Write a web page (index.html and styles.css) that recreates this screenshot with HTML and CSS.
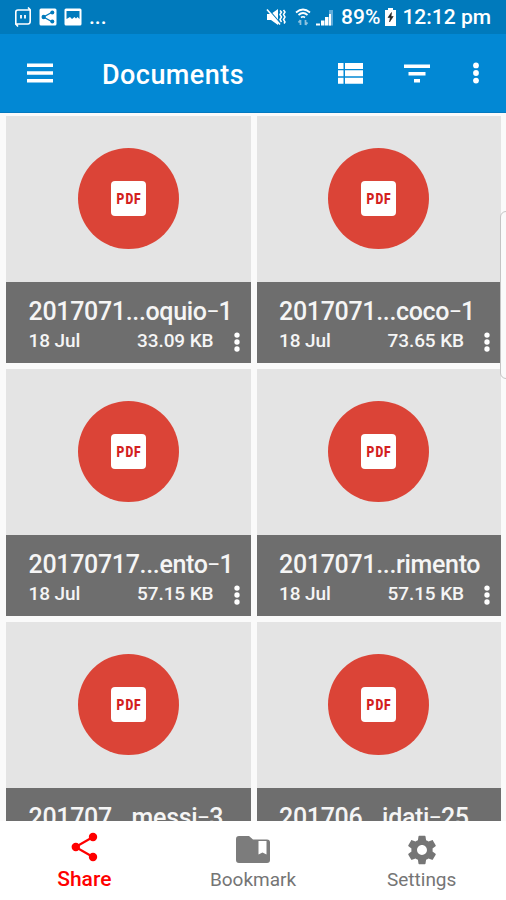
FILE: index.html
```html
<!DOCTYPE html>
<html lang="en">
<head>
    <meta charset="UTF-8">
    <meta name="viewport" content="width=device-width, initial-scale=1.0">
    <title>Documents</title>
    <link rel="stylesheet" href="styles.css">
</head>
<body>
    <!-- Shared icons -->
    <svg class="sprite" width="0" height="0">
        <symbol id="icon-dots" viewBox="0 0 8 24">
            <circle cx="4" cy="4.4" r="2.9"/>
            <circle cx="4" cy="12" r="2.9"/>
            <circle cx="4" cy="19.6" r="2.9"/>
        </symbol>
    </svg>

    <div class="status-bar">
        <div class="status-left">
            <svg width="18" height="20" viewBox="0 0 18 20" fill="none" stroke="#fff" stroke-width="1.6">
                <path d="M4 3h12.200v11M14 .5 16.500 3M14 17H1.800V5M4 19.500 1.800 17"/>
                <path d="M1.800 5q0-2 2.200-2M16.200 14q0 3-2.200 3"/>
                <path d="M7 8v3.500M11 8v3.500" stroke-width="1.800"/>
            </svg>
            <svg width="18" height="18" viewBox="0 0 18 18">
                <rect x=".5" y=".5" width="17" height="17" rx="1.500" fill="#fff"/>
                <path d="M13.500 4 4.500 9l9 5" fill="none" stroke="#007abc" stroke-width="1.300"/>
                <g fill="#007abc"><circle cx="13.300" cy="4.500" r="2"/><circle cx="4.700" cy="9" r="2.200"/><circle cx="13.300" cy="13.500" r="2"/></g>
            </svg>
            <svg width="18" height="18" viewBox="0 0 18 18">
                <rect x=".5" y=".5" width="17" height="17" rx="1.500" fill="#fff"/>
                <path d="M2.500 3h13v8l-2-2-1.500 1.500L10.500 9 8 11 6 9l-3.500 2z" fill="#007abc"/>
            </svg>
            <span class="more">...</span>
        </div>
        <div class="status-right">
            <svg class="mute" width="20" height="18" viewBox="0 0 20 18">
                <path d="M1 6h4l7-5v16l-7-5H1z" fill="#fff"/>
                <path d="M2.500 1.500l12 14" stroke="#007abc" stroke-width="1.200"/>
                <path d="M1 1.500l13 15" stroke="#fff" stroke-width="1.600"/>
                <path d="M14 2.500l1.500 1.500-1.500 2.500 1.500 2.500-1.500 2.500 1.500 2.500M17.500 2l1.500 2-1.500 2.500 1.500 2.500-1.500 2.500 1.500 2.500-1 1.500" fill="none" stroke="#fff" stroke-width="1.500"/>
            </svg>
            <svg class="wifi" width="16" height="18" viewBox="0 0 16 18" fill="none" stroke="#fff" stroke-width="1.700">
                <path d="M1 4.500q7-6 14 0M3.500 7q4.500-4 9 0M6 9.500q2-1.500 4 0"/>
                <path d="M5.500 17v-5M3.500 14.500l2-2.500M10.500 12v5M12.500 14.500l-2 2.500" stroke="#8fc3e0" stroke-width="1.700"/>
            </svg>
            <svg class="signal" width="18" height="17" viewBox="0 0 18 17">
                <path d="M0 14.500h4v2H0zM5 11.500h3.500v5H5zM9 8h3.500v8.500H9z" fill="#fff"/>
                <path d="M13 1h4v15.500h-4z" fill="#62addb"/>
                <path d="M13 5h2v11.500h-2z" fill="#fff"/>
            </svg>
            <span class="battery-text">89%</span>
            <svg class="battery" width="11" height="18" viewBox="0 0 11 18">
                <path d="M3 0h5v2h3v16H0V2h3z" fill="#fff"/>
                <path d="M6.500 4.500 3 9.500h2.300L4.500 14l3.700-5.500H6z" fill="#222" stroke="#222" stroke-width=".6"/>
            </svg>
            <span class="clock">12:12 pm</span>
        </div>
    </div>

    <header class="app-bar">
        <svg class="menu" width="26" height="20" viewBox="0 0 26 20" fill="#fff">
            <path d="M0 .5h26v3.500H0zM0 8.200h26v3.500H0zM0 16h26v3.500H0z"/>
        </svg>
        <h1>Documents</h1>
        <svg class="list" width="25" height="21" viewBox="0 0 25 21" fill="#fff">
            <path d="M0 0h5.500v6H0zM7 0h18v6H7zM0 7.300h5.500v6H0zM7 7.300h18v6H7zM0 14.700h5.500v6H0zM7 14.700h18v6H7z"/>
        </svg>
        <svg class="filter" width="26" height="19" viewBox="0 0 26 19" fill="#fff">
            <path d="M0 .5h26v3.500H0zM4.500 8h17v3.500h-17zM10 15h6v3.500h-6z"/>
        </svg>
        <svg class="overflow" width="8" height="24"><use href="#icon-dots"/></svg>
    </header>

    <main class="grid">
        <div class="card">
            <div class="thumb"><div class="circle"><div class="file"><span>PDF</span></div></div></div>
            <div class="info">
                <div class="name">2017071...oquio<span class="dash">–</span>1</div>
                <div class="meta"><span class="date">18 Jul</span><span class="size">33.09 KB</span><svg class="dots" width="8" height="22"><use href="#icon-dots"/></svg></div>
            </div>
        </div>
        <div class="card">
            <div class="thumb"><div class="circle"><div class="file"><span>PDF</span></div></div></div>
            <div class="info">
                <div class="name">2017071...coco<span class="dash">–</span>1</div>
                <div class="meta"><span class="date">18 Jul</span><span class="size">73.65 KB</span><svg class="dots" width="8" height="22"><use href="#icon-dots"/></svg></div>
            </div>
        </div>
        <div class="card">
            <div class="thumb"><div class="circle"><div class="file"><span>PDF</span></div></div></div>
            <div class="info">
                <div class="name">20170717...ento<span class="dash">–</span>1</div>
                <div class="meta"><span class="date">18 Jul</span><span class="size">57.15 KB</span><svg class="dots" width="8" height="22"><use href="#icon-dots"/></svg></div>
            </div>
        </div>
        <div class="card">
            <div class="thumb"><div class="circle"><div class="file"><span>PDF</span></div></div></div>
            <div class="info">
                <div class="name">2017071...rimento</div>
                <div class="meta"><span class="date">18 Jul</span><span class="size">57.15 KB</span><svg class="dots" width="8" height="22"><use href="#icon-dots"/></svg></div>
            </div>
        </div>
        <div class="card">
            <div class="thumb"><div class="circle"><div class="file"><span>PDF</span></div></div></div>
            <div class="info">
                <div class="name">201707...messi<span class="dash">–</span>3</div>
            </div>
        </div>
        <div class="card">
            <div class="thumb"><div class="circle"><div class="file"><span>PDF</span></div></div></div>
            <div class="info">
                <div class="name">201706...idati<span class="dash">–</span>25</div>
            </div>
        </div>
        <div class="edge-handle"></div>
    </main>

    <nav class="bottom-nav">
        <a class="tab active">
            <svg width="28" height="30" viewBox="0 0 28 30">
                <path d="M23 5 5.500 15 23 25" fill="none" stroke="#f00" stroke-width="2.200"/>
                <g fill="#f00"><circle cx="23" cy="5" r="4.200"/><circle cx="5.800" cy="15" r="4.200"/><circle cx="23" cy="25" r="4.200"/></g>
            </svg>
            <span>Share</span>
        </a>
        <a class="tab">
            <svg class="folder" width="34" height="27" viewBox="0 0 34 27">
                <path d="M3 0h10l4 3.500h14q3 0 3 3V24q0 3-3 3H3q-3 0-3-3V3q0-3 3-3z" fill="#7c7c7c"/>
                <path d="M22.500 5h8v13.500l-4-2-4 2z" fill="#fff"/>
            </svg>
            <span>Bookmark</span>
        </a>
        <a class="tab">
            <svg class="gear" width="34" height="34" viewBox="0 0 24 24">
                <path fill="#757575" d="M19.430 12.980c.04-.32.07-.64.07-.98s-.03-.66-.07-.98l2.110-1.650c.19-.15.24-.42.12-.64l-2-3.460c-.12-.22-.39-.3-.61-.22l-2.490 1c-.52-.4-1.080-.73-1.690-.98l-.38-2.650C14.460 2.180 14.250 2 14 2h-4c-.25 0-.46.18-.49.42l-.38 2.650c-.61.25-1.170.59-1.690.98l-2.490-1c-.23-.09-.49 0-.61.22l-2 3.460c-.13.22-.07.49.12.64l2.110 1.650c-.04.32-.07.65-.07.98s.03.66.07.98l-2.110 1.650c-.19.15-.24.42-.12.64l2 3.460c.12.22.39.3.61.22l2.490-1c.52.4 1.080.73 1.690.98l.38 2.650c.03.24.24.42.49.42h4c.25 0 .46-.18.49-.42l.38-2.650c.61-.25 1.170-.59 1.690-.98l2.490 1c.23.09.49 0 .61-.22l2-3.460c.12-.22.07-.49-.12-.64l-2.110-1.650zM12 15.500c-1.930 0-3.500-1.570-3.500-3.500s1.570-3.500 3.500-3.500 3.500 1.570 3.500 3.500-1.570 3.500-3.500 3.500z"/>
            </svg>
            <span>Settings</span>
        </a>
    </nav>
</body>
</html>
```
FILE: styles.css
```css
* {
    box-sizing: border-box;
}
body {
    margin: 0;
    height: 900px;
    display: flex;
    flex-direction: column;
    overflow: hidden;
    background-color: #fafafa;
    font-family: Roboto, sans-serif;
}
.sprite {
    position: absolute;
}
svg {
    display: block;
    flex: none;
}
.status-bar {
    display: flex;
    flex: none;
    justify-content: space-between;
    height: 34px;
    padding: 0 15px 0 14px;
    background-color: #007abc;
    color: white;
    font-size: 21px;
    font-weight: 500;
    line-height: 36px;
}
.status-left, .status-right {
    display: flex;
    align-items: center;
}
.status-left {
    gap: 7px;
}
.wifi {
    margin-left: 9px;
}
.signal {
    margin-left: 5px;
}
.battery-text {
    margin-left: 7px;
}
.battery {
    margin-left: 5px;
}
.clock {
    margin-left: 6px;
}
.app-bar {
    display: flex;
    flex: none;
    align-items: center;
    height: 79px;
    padding: 0 26px 0 27px;
    background-color: #0288d4;
    border-bottom: 1px solid #0379c0;
    color: white;
    fill: white;
}
h1 {
    flex: 1;
    margin: 4px 0 0 49px;
    font-size: 27px;
    font-weight: 500;
    letter-spacing: 0.45px;
}
.filter {
    margin-left: 41px;
}
.overflow {
    margin-left: 42px;
}
.grid {
    position: relative;
    flex: 1;
    display: grid;
    grid-template-columns: repeat(2, minmax(0, 1fr));
    grid-auto-rows: 247px;
    gap: 6px;
    padding: 3px 5px 0 6px;
    overflow: hidden;
}
.card {
    display: flex;
    flex-direction: column;
}
.thumb {
    display: flex;
    justify-content: center;
    height: 166px;
    padding-top: 32px;
    background-color: #e4e4e4;
}
.circle {
    display: flex;
    align-items: center;
    justify-content: center;
    width: 101px;
    height: 101px;
    border-radius: 50%;
    background-color: #db4437;
}
.file {
    width: 35px;
    height: 35px;
    border-radius: 4px;
    background-color: white;
    color: #d32020;
    font-size: 15px;
    font-weight: 900;
    letter-spacing: 1.2px;
    line-height: 37px;
}
.file span {
    display: block;
    transform: scaleX(0.8);
    transform-origin: 28px 0;
}
.info {
    flex: 1;
    padding: 15px 10px 0 22.5px;
    background-color: #6e6e6e;
    color: #f5f5f5;
}
.name {
    font-size: 25px;
    font-weight: 500;
    letter-spacing: -0.33px;
    line-height: 30px;
    white-space: nowrap;
}
.dash {
    font-size: 19px;
    line-height: 20px;
    vertical-align: 2px;
}
.meta {
    display: flex;
    font-size: 19px;
    font-weight: 500;
    letter-spacing: -0.1px;
    line-height: 27px;
}
.size {
    margin-left: auto;
}
.dots {
    margin: 4px 0 0 19px;
    fill: white;
}
.edge-handle {
    position: absolute;
    top: 98px;
    right: -10px;
    width: 16px;
    height: 168px;
    border: 1px solid #c4c4c4;
    border-radius: 6px;
    background-color: #fafafa;
}
.bottom-nav {
    display: grid;
    flex: none;
    grid-template-columns: 1fr 1fr 1fr;
    height: 79px;
    background-color: white;
}
.tab {
    display: flex;
    flex-direction: column;
    align-items: center;
    padding: 11px 0 9px;
    color: #757575;
    font-size: 19px;
    line-height: 22px;
}
.tab span {
    margin-top: auto;
}
.folder {
    margin-top: 4px;
}
.gear {
    margin-top: 1px;
}
.active {
    padding-bottom: 10px;
    color: #f00;
    font-size: 21px;
    font-weight: 500;
}
```
